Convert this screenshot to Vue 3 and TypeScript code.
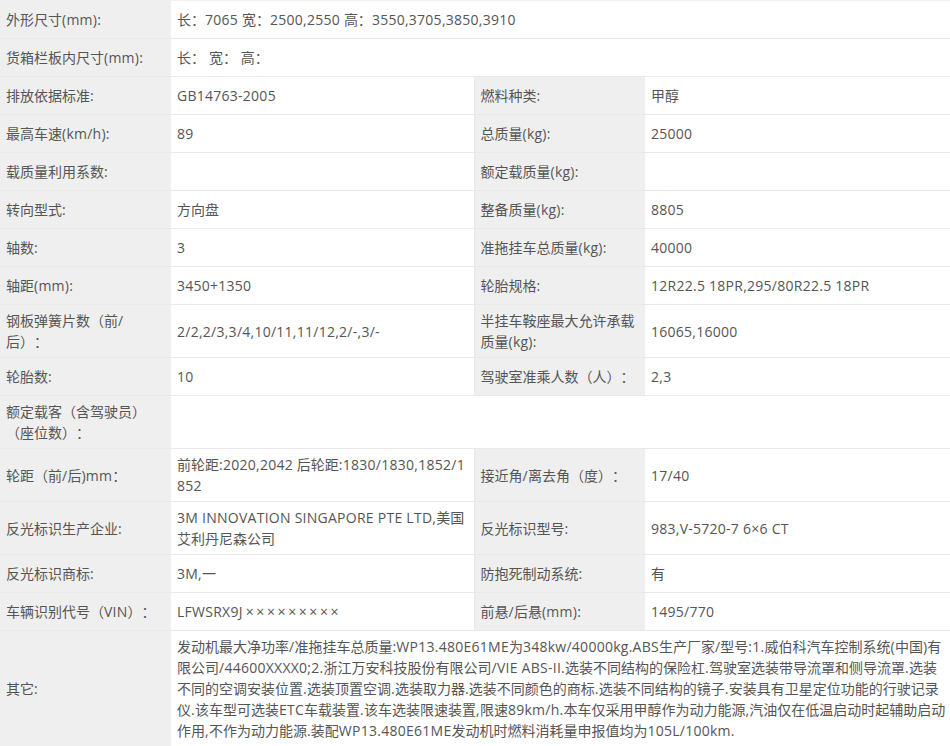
<script setup lang="ts">
interface Cell { label: string; value: string; span?: boolean }
type Row = { height: number; cells: Cell[] }
const rows: Row[] = [
  { height: 38, cells: [{ label: '外形尺寸(mm):', value: '长：7065 宽：2500,2550 高：3550,3705,3850,3910', span: true }] },
  { height: 38, cells: [{ label: '货箱栏板内尺寸(mm):', value: '长： 宽： 高：', span: true }] },
  { height: 38, cells: [{ label: '排放依据标准:', value: 'GB14763-2005' }, { label: '燃料种类:', value: '甲醇' }] },
  { height: 38, cells: [{ label: '最高车速(km/h):', value: '89' }, { label: '总质量(kg):', value: '25000' }] },
  { height: 38, cells: [{ label: '载质量利用系数:', value: '' }, { label: '额定载质量(kg):', value: '' }] },
  { height: 38, cells: [{ label: '转向型式:', value: '方向盘' }, { label: '整备质量(kg):', value: '8805' }] },
  { height: 38, cells: [{ label: '轴数:', value: '3' }, { label: '准拖挂车总质量(kg):', value: '40000' }] },
  { height: 38, cells: [{ label: '轴距(mm):', value: '3450+1350' }, { label: '轮胎规格:', value: '12R22.5 18PR,295/80R22.5 18PR' }] },
  { height: 53, cells: [{ label: '钢板弹簧片数（前/\n后）：', value: '2/2,2/3,3/4,10/11,11/12,2/-,3/-' }, { label: '半挂车鞍座最大允许承载\n质量(kg):', value: '16065,16000' }] },
  { height: 38, cells: [{ label: '轮胎数:', value: '10' }, { label: '驾驶室准乘人数（人）：', value: '2,3' }] },
  { height: 53, cells: [{ label: '额定载客（含驾驶员）\n（座位数）：', value: '', span: true }] },
  { height: 53, cells: [{ label: '轮距（前/后)mm：', value: '前轮距:2020,2042 后轮距:1830/1830,1852/1\n852' }, { label: '接近角/离去角（度）：', value: '17/40' }] },
  { height: 53, cells: [{ label: '反光标识生产企业:', value: '3M INNOVATION SINGAPORE PTE LTD,美国\n艾利丹尼森公司' }, { label: '反光标识型号:', value: '983,V-5720-7 6×6 CT' }] },
  { height: 38, cells: [{ label: '反光标识商标:', value: '3M,一' }, { label: '防抱死制动系统:', value: '有' }] },
  { height: 38, cells: [{ label: '车辆识别代号（VIN）：', value: 'LFWSRX9J×××××××××' }, { label: '前悬/后悬(mm):', value: '1495/770' }] },
  { height: 116, cells: [{ label: '其它:', value: '发动机最大净功率/准拖挂车总质量:WP13.480E61ME为348kw/40000kg.ABS生产厂家/型号:1.威伯科汽车控制系统(中国)有\n限公司/44600XXXX0;2.浙江万安科技股份有限公司/VIE ABS-II.选装不同结构的保险杠.驾驶室选装带导流罩和侧导流罩.选装\n不同的空调安装位置.选装顶置空调.选装取力器.选装不同颜色的商标.选装不同结构的镜子.安装具有卫星定位功能的行驶记录\n仪.该车型可选装ETC车载装置.该车选装限速装置,限速89km/h.本车仅采用甲醇作为动力能源,汽油仅在低温启动时起辅助启动\n作用,不作为动力能源.装配WP13.480E61ME发动机时燃料消耗量申报值均为105L/100km.', span: true }] },
]

interface Run { text: string; kind: string }
// Latin text and runs of multiplication signs are tracked apart from CJK; each source line is one block.
function lines(text: string): Run[][] {
  return text.split('\n').map((line) =>
    (line.match(/××+|(?:[\x20-\x7e]|×(?!×))+|[^\x20-\x7e×]+/g) ?? []).map((p) => ({
      text: p,
      kind: p.startsWith('××') ? 'times' : /^[\x20-\x7e×]/.test(p) ? 'latin' : 'cjk',
    })),
  )
}
</script>

<template>
  <table class="spec">
    <colgroup>
      <col class="c1" /><col class="c2" /><col class="c3" /><col class="c4" />
    </colgroup>
    <tbody>
      <tr v-for="(row, i) in rows" :key="i" :style="{ height: row.height + 'px' }">
        <template v-for="(cell, j) in row.cells" :key="j">
          <th>
            <div v-for="(line, n) in lines(cell.label)" :key="n" class="line"><span v-for="(r, k) in line" :key="k" :class="r.kind">{{ r.text }}</span></div>
          </th>
          <td :colspan="cell.span ? 3 : 1" :class="{ first: j === 0 && !cell.span }">
            <div v-for="(line, n) in lines(cell.value)" :key="n" class="line"><span v-for="(r, k) in line" :key="k" :class="r.kind">{{ r.text }}</span></div>
          </td>
        </template>
      </tr>
    </tbody>
  </table>
</template>

<style>
html, body { margin: 0; background: #fff; overflow: hidden; }
</style>

<style scoped>
.spec {
  width: 950px;
  table-layout: fixed;
  border-collapse: collapse;
  font-family: "Open Sans", "Noto Sans CJK SC", sans-serif;
  font-size: 14px;
  line-height: 21px;
  color: #555;
  text-spacing-trim: space-all;
}
.c1 { width: 171px; }
.c2 { width: 303px; }
.c3 { width: 171px; }
.c4 { width: 305px; }
th, td {
  box-sizing: border-box;
  padding: 0 0 0 6px;
  border-bottom: 1px solid #e9e9e9;
  text-align: left;
  font-weight: 400;
  vertical-align: middle;
}
.line { white-space: pre; }
tr:first-child th, tr:first-child td { border-top: 1px solid #f0f0f0; }
th { background: #efefef; }
td { background: #fff; }
td.first { border-right: 1px solid #e9e9e9; }
.latin { letter-spacing: 0.26px; }
.times { letter-spacing: 2.6px; margin-left: 3px; }
</style>
